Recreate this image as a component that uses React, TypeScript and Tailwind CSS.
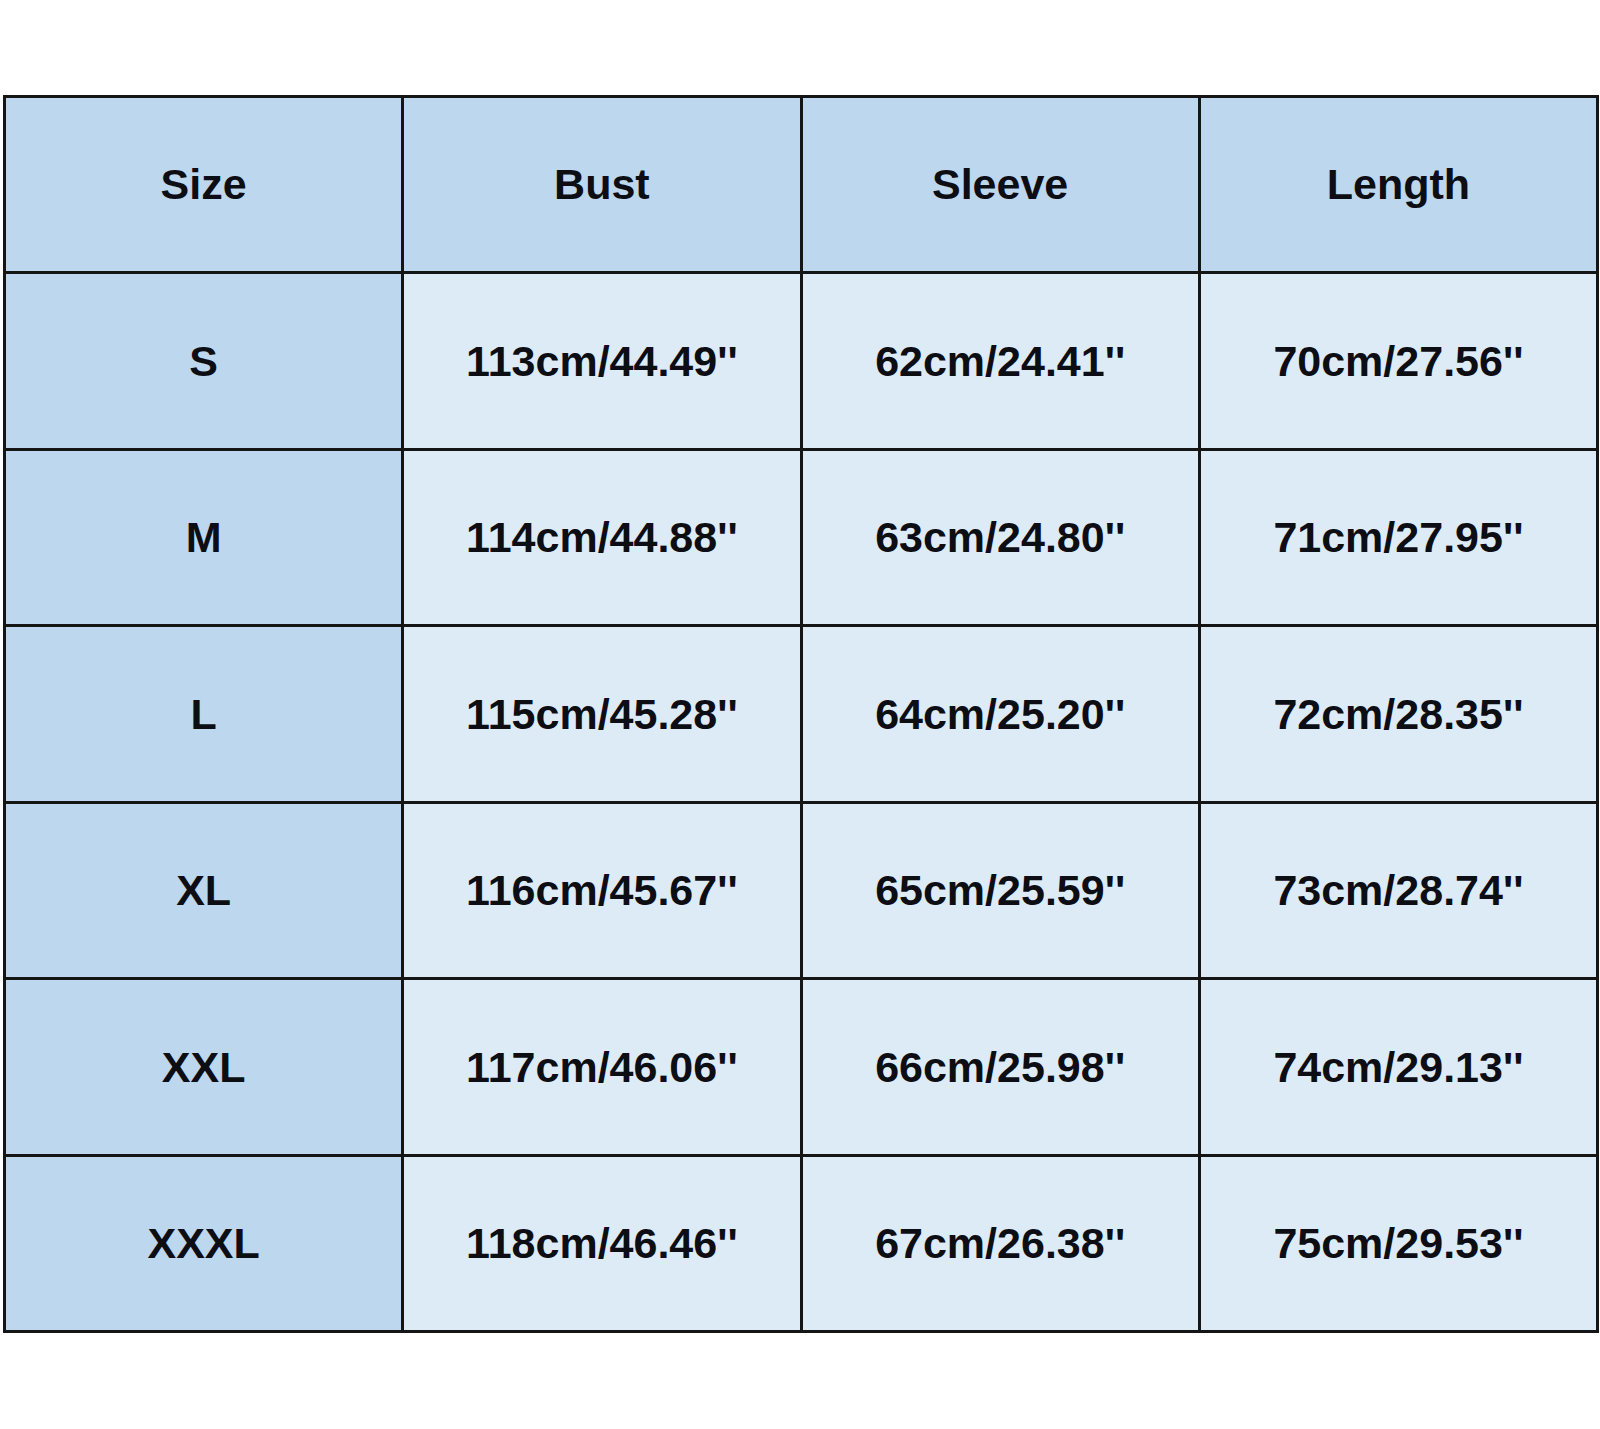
const header = ["Size", "Bust", "Sleeve", "Length"];

const rows = [
  ["S", "113cm/44.49''", "62cm/24.41''", "70cm/27.56''"],
  ["M", "114cm/44.88''", "63cm/24.80''", "71cm/27.95''"],
  ["L", "115cm/45.28''", "64cm/25.20''", "72cm/28.35''"],
  ["XL", "116cm/45.67''", "65cm/25.59''", "73cm/28.74''"],
  ["XXL", "117cm/46.06''", "66cm/25.98''", "74cm/29.13''"],
  ["XXXL", "118cm/46.46''", "67cm/26.38''", "75cm/29.53''"],
];

export default function App() {
  return (
    <div className="w-[1600px] h-[1429px] bg-white pt-[95px] pl-[3px]" style={{ fontFamily: '"Liberation Sans", Arial, sans-serif' }}>
      <table className="border-collapse w-[1596px] table-fixed text-[43px] font-bold text-[#0d0d14]">
        <thead>
          <tr>
            {header.map((h) => (
              <th key={h} className="h-[176px] border-[3px] border-[#151515] bg-[#bdd7ee] text-center font-bold">
                {h}
              </th>
            ))}
          </tr>
        </thead>
        <tbody>
          {rows.map((r) => (
            <tr key={r[0]}>
              {r.map((c, i) => (
                <td
                  key={i}
                  className={`h-[176.5px] border-[3px] border-[#151515] text-center ${i === 0 ? "bg-[#bdd7ee]" : "bg-[#ddebf7]"}`}
                >
                  {c}
                </td>
              ))}
            </tr>
          ))}
        </tbody>
      </table>
    </div>
  );
}
